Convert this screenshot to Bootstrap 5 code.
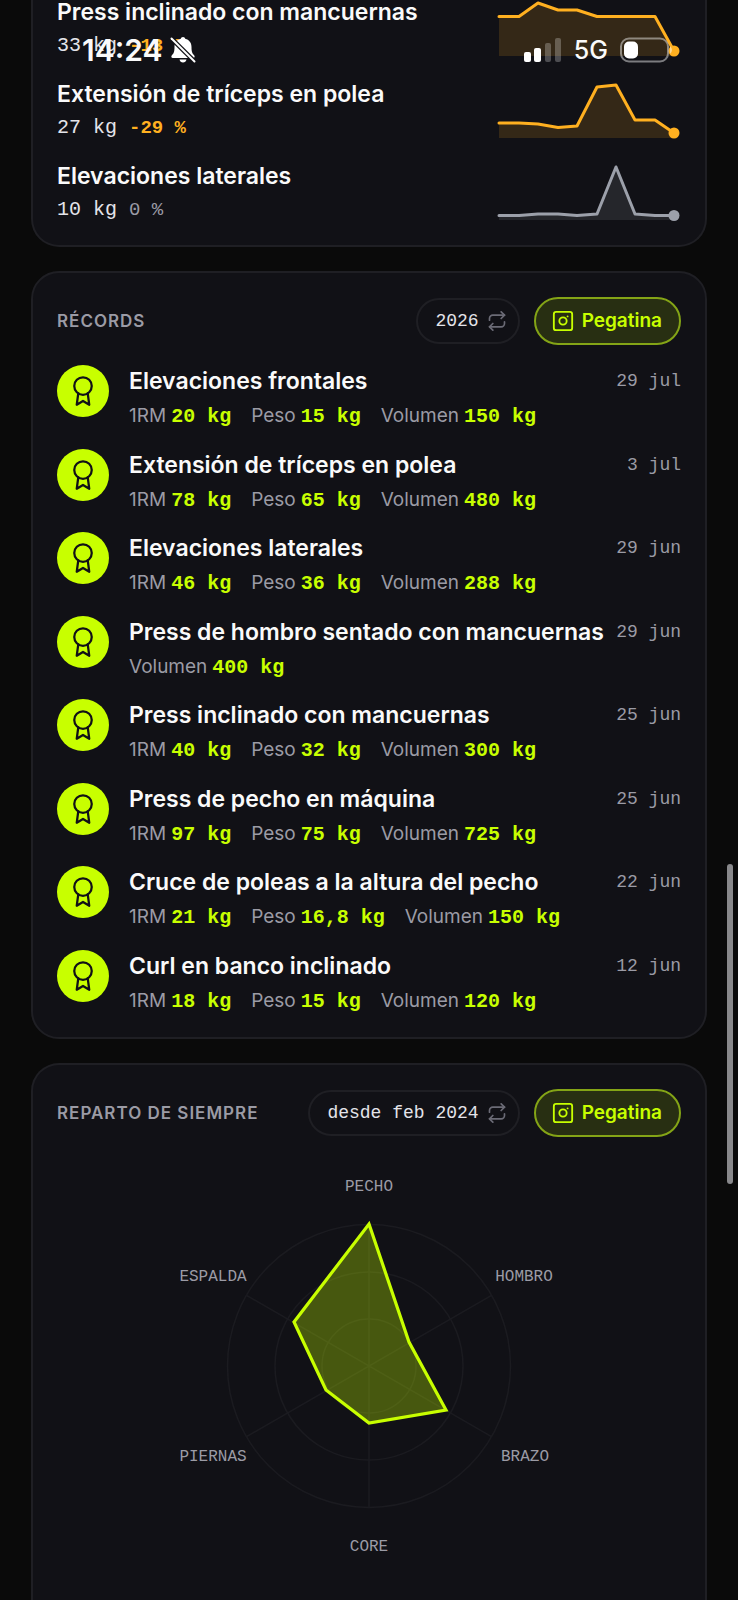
<!DOCTYPE html>
<html lang="es">
<head>
<meta charset="utf-8">
<meta name="viewport" content="width=device-width, initial-scale=1">
<title>Récords</title>
<link href="https://cdn.jsdelivr.net/npm/bootstrap@5.3.0/dist/css/bootstrap.min.css" rel="stylesheet">
<style>
  :root { --ink: #fafafa; --muted: #9b9ba5; --line: #1f1f24; --panel: #111116; --lime: #c8ff00; --amber: #ffb020; }
  body { background: #0a0a0a; color: var(--ink); font-family: Inter, "Liberation Sans", sans-serif; }
  .mono { font-family: "Liberation Mono", monospace; }
  .screen { height: 100vh; padding: 0 31px; gap: 24px; }
  .panel { background: var(--panel); border: 2px solid var(--line); border-radius: 28px; padding: 24px 24px 21px; }
  .panel-top { border-top: 0; border-radius: 0 0 28px 28px; padding: 0 24px 21px; }
  .panel-end { border-bottom: 0; border-radius: 28px 28px 0 0; }
  .trends { gap: 20px; margin-top: -2px; }
  .trend-text { gap: 6px; }
  .name { font-size: 23px; font-weight: 600; line-height: 28px; }
  .value { font-size: 20px; line-height: 28px; color: #e4e4ea; }
  .delta { font-size: 19px; font-weight: 700; margin-left: 12px; }
  .flat { color: var(--muted); font-weight: 400; }
  .down, .spark-down { color: var(--amber); }
  .spark-flat { color: #9ca0aa; }
  .spark { width: 184px; height: 56px; overflow: visible; }
  .heading { font-size: 17px; font-weight: 600; line-height: 24px; letter-spacing: 1px; color: var(--muted); text-transform: uppercase; margin: 0; }
  .tools { gap: 14px; }
  .pill { display: flex; align-items: center; gap: 8px; border-radius: 24px; border: 2px solid var(--line); background: transparent; }
  .pill-range { height: 46px; padding: 0 11px 0 17px; font-size: 18px; color: #e4e4ea; }
  .pill-range svg { color: #6b6b76; }
  .pill-share { height: 48px; padding: 0 17px 0 16px; font-size: 19px; font-weight: 600; color: var(--lime); border-color: #84a416; background: #282f12; }
  .records { min-height: 651px; margin-top: 20px; }
  .medal { width: 52px; height: 52px; background: var(--lime); color: #111116; }
  .record { gap: 20px; }
  .record-body { gap: 6px; padding-top: 1px; }
  .record .name { line-height: 30px; }
  .date { font-size: 18px; line-height: 30px; color: var(--muted); }
  .stats { column-gap: 20px; font-size: 19px; line-height: 28px; color: var(--muted); }
  .stats b { font-size: 20px; color: var(--lime); margin-left: 5px; }
  .radar { margin-top: 20px; }
  .radar text { font-size: 16px; fill: var(--muted); }
  .statusbar { top: 0; left: 0; right: 0; height: 100px; padding: 0 64px 0 82px; z-index: 5; pointer-events: none; }
  .clock { font-size: 30px; font-weight: 600; line-height: 32px; }
  .network { font-size: 25px; font-weight: 500; line-height: 32px; }
  .thumb { right: 5px; top: 54%; width: 6px; height: 20%; background: #88888b; z-index: 6; }
</style>
</head>
<body>
<svg class="d-none" aria-hidden="true">
  <symbol id="i-award" viewBox="0 0 24 24"><g fill="none" stroke="currentColor" stroke-width="1.8" stroke-linecap="round" stroke-linejoin="round"><circle cx="12" cy="8" r="7"/><path d="M8.21 13.89 7 23l5-3 5 3-1.21-9.12"/></g></symbol>
  <symbol id="i-repeat" viewBox="0 0 24 24"><g fill="none" stroke="currentColor" stroke-width="2" stroke-linecap="round" stroke-linejoin="round"><path d="m17 1 4 4-4 4"/><path d="M3 11V9a4 4 0 0 1 4-4h14"/><path d="m7 23-4-4 4-4"/><path d="M21 13v2a4 4 0 0 1-4 4H3"/></g></symbol>
  <symbol id="i-sticker" viewBox="0 0 24 24"><g fill="none" stroke="currentColor" stroke-width="2" stroke-linecap="round"><rect x="2" y="2" width="20" height="20" rx="2.5"/><circle cx="12" cy="12" r="4"/><path d="M17 7h.01"/></g></symbol>
</svg>

<header class="statusbar position-absolute d-flex align-items-center justify-content-between">
  <div class="d-flex align-items-center gap-2">
    <span class="clock">14:24</span>
    <svg width="26" height="28" viewBox="0 0 26 28" aria-label="Silencio"><path fill="#fff" d="M13 1c1.200 0 2 .8 2.200 1.800 4 1 6.300 4 6.300 8.200 0 5.500 1 6.500 2.800 8.500.8 1 .2 2.500-1.100 2.500H2.800c-1.300 0-1.900-1.500-1.100-2.500C3.500 17.500 4.500 16.500 4.500 11c0-4.200 2.300-7.200 6.300-8.200C11 1.800 11.800 1 13 1ZM9.500 23.500h7c-.4 1.800-1.700 3-3.500 3s-3.100-1.200-3.500-3Z"/><path stroke="#111116" stroke-width="4.500" d="m1 2 24 24"/><path stroke="#fff" stroke-width="2" stroke-linecap="round" d="m1.500 2.500 23 23"/></svg>
  </div>
  <div class="d-flex align-items-center">
    <svg width="38" height="24" viewBox="0 0 38 24" aria-label="Cobertura"><g fill="#fff"><rect y="14" width="7" height="10" rx="2"/><rect x="10" y="10" width="7" height="14" rx="2"/><g opacity=".25"><rect x="21" y="5" width="6" height="19" rx="2"/><rect x="31" width="6" height="24" rx="2"/></g></g></svg>
    <span class="network ms-2 ps-1">5G</span>
    <svg class="ms-2 ps-1" width="58" height="26" viewBox="0 0 54 26" aria-label="Batería"><rect x="1" y="1.500" width="47" height="23" rx="8" fill="none" stroke="#fff" stroke-opacity=".45" stroke-width="2"/><rect x="4" y="4.500" width="14" height="17" rx="5" fill="#fff"/><path d="M50 9q4 4 0 8z" fill="#fff" fill-opacity=".5"/></svg>
  </div>
</header>
<div class="thumb position-fixed rounded-pill"></div>

<main class="screen d-flex flex-column overflow-hidden">
  <section class="panel panel-top flex-shrink-0">
    <ul class="trends list-unstyled d-flex flex-column mb-0">
      <li class="d-flex align-items-center justify-content-between">
        <div class="trend-text d-flex flex-column"><span class="name">Press inclinado con mancuernas</span><span class="value mono">33 kg<span class="delta down">-13 %</span></span></div>
        <svg class="spark spark-down" viewBox="0 0 184 56"><path fill="currentColor" fill-opacity=".15" d="M2 15.500H22L41 2 61 9H80L100 15.500H158L177 50V55H2Z"/><path fill="none" stroke="currentColor" stroke-width="3" stroke-linecap="round" stroke-linejoin="round" d="M2 15.500H22L41 2 61 9H80L100 15.500H158L177 50"/><circle cx="177" cy="50" r="5.500" fill="currentColor"/></svg>
      </li>
      <li class="d-flex align-items-center justify-content-between">
        <div class="trend-text d-flex flex-column"><span class="name">Extensión de tríceps en polea</span><span class="value mono">27 kg<span class="delta down">-29 %</span></span></div>
        <svg class="spark spark-down" viewBox="0 0 184 56"><path fill="currentColor" fill-opacity=".15" d="M2 40H22L41 41 61 44.500 80 43 100 4 119 2 138 37H158L177 50V55H2Z"/><path fill="none" stroke="currentColor" stroke-width="3" stroke-linecap="round" stroke-linejoin="round" d="M2 40H22L41 41 61 44.500 80 43 100 4 119 2 138 37H158L177 50"/><circle cx="177" cy="50" r="5.500" fill="currentColor"/></svg>
      </li>
      <li class="d-flex align-items-center justify-content-between">
        <div class="trend-text d-flex flex-column"><span class="name">Elevaciones laterales</span><span class="value mono">10 kg<span class="delta flat">0 %</span></span></div>
        <svg class="spark spark-flat" viewBox="0 0 184 56"><path fill="currentColor" fill-opacity=".15" d="M2 50.500H22L41 49H61L80 50.500 100 49 119 2 138 49 158 50.500H177V55H2Z"/><path fill="none" stroke="currentColor" stroke-width="3" stroke-linecap="round" stroke-linejoin="round" d="M2 50.500H22L41 49H61L80 50.500 100 49 119 2 138 49 158 50.500H177"/><circle cx="177" cy="50.500" r="5.500" fill="currentColor"/></svg>
      </li>
    </ul>
  </section>

  <section class="panel flex-shrink-0">
    <div class="d-flex align-items-center justify-content-between">
      <h2 class="heading">Récords</h2>
      <div class="tools d-flex align-items-center">
        <button type="button" class="pill pill-range mono">2026 <svg width="20" height="20"><use href="#i-repeat"/></svg></button>
        <button type="button" class="pill pill-share"><svg width="22" height="22"><use href="#i-sticker"/></svg> Pegatina</button>
      </div>
    </div>
    <ul class="records list-unstyled d-flex flex-column justify-content-between mb-0">
      <li class="record d-flex">
        <span class="medal rounded-circle d-flex align-items-center justify-content-center flex-shrink-0"><svg width="30" height="30"><use href="#i-award"/></svg></span>
        <div class="record-body d-flex flex-column flex-grow-1"><div class="d-flex justify-content-between"><span class="name">Elevaciones frontales</span><span class="date mono">29 jul</span></div>
        <div class="stats d-flex"><span>1RM<b class="mono">20 kg</b></span><span>Peso<b class="mono">15 kg</b></span><span>Volumen<b class="mono">150 kg</b></span></div></div>
      </li>
      <li class="record d-flex">
        <span class="medal rounded-circle d-flex align-items-center justify-content-center flex-shrink-0"><svg width="30" height="30"><use href="#i-award"/></svg></span>
        <div class="record-body d-flex flex-column flex-grow-1"><div class="d-flex justify-content-between"><span class="name">Extensión de tríceps en polea</span><span class="date mono">3 jul</span></div>
        <div class="stats d-flex"><span>1RM<b class="mono">78 kg</b></span><span>Peso<b class="mono">65 kg</b></span><span>Volumen<b class="mono">480 kg</b></span></div></div>
      </li>
      <li class="record d-flex">
        <span class="medal rounded-circle d-flex align-items-center justify-content-center flex-shrink-0"><svg width="30" height="30"><use href="#i-award"/></svg></span>
        <div class="record-body d-flex flex-column flex-grow-1"><div class="d-flex justify-content-between"><span class="name">Elevaciones laterales</span><span class="date mono">29 jun</span></div>
        <div class="stats d-flex"><span>1RM<b class="mono">46 kg</b></span><span>Peso<b class="mono">36 kg</b></span><span>Volumen<b class="mono">288 kg</b></span></div></div>
      </li>
      <li class="record d-flex">
        <span class="medal rounded-circle d-flex align-items-center justify-content-center flex-shrink-0"><svg width="30" height="30"><use href="#i-award"/></svg></span>
        <div class="record-body d-flex flex-column flex-grow-1"><div class="d-flex justify-content-between"><span class="name">Press de hombro sentado con mancuernas</span><span class="date mono">29 jun</span></div>
        <div class="stats d-flex"><span>Volumen<b class="mono">400 kg</b></span></div></div>
      </li>
      <li class="record d-flex">
        <span class="medal rounded-circle d-flex align-items-center justify-content-center flex-shrink-0"><svg width="30" height="30"><use href="#i-award"/></svg></span>
        <div class="record-body d-flex flex-column flex-grow-1"><div class="d-flex justify-content-between"><span class="name">Press inclinado con mancuernas</span><span class="date mono">25 jun</span></div>
        <div class="stats d-flex"><span>1RM<b class="mono">40 kg</b></span><span>Peso<b class="mono">32 kg</b></span><span>Volumen<b class="mono">300 kg</b></span></div></div>
      </li>
      <li class="record d-flex">
        <span class="medal rounded-circle d-flex align-items-center justify-content-center flex-shrink-0"><svg width="30" height="30"><use href="#i-award"/></svg></span>
        <div class="record-body d-flex flex-column flex-grow-1"><div class="d-flex justify-content-between"><span class="name">Press de pecho en máquina</span><span class="date mono">25 jun</span></div>
        <div class="stats d-flex"><span>1RM<b class="mono">97 kg</b></span><span>Peso<b class="mono">75 kg</b></span><span>Volumen<b class="mono">725 kg</b></span></div></div>
      </li>
      <li class="record d-flex">
        <span class="medal rounded-circle d-flex align-items-center justify-content-center flex-shrink-0"><svg width="30" height="30"><use href="#i-award"/></svg></span>
        <div class="record-body d-flex flex-column flex-grow-1"><div class="d-flex justify-content-between"><span class="name">Cruce de poleas a la altura del pecho</span><span class="date mono">22 jun</span></div>
        <div class="stats d-flex"><span>1RM<b class="mono">21 kg</b></span><span>Peso<b class="mono">16,8 kg</b></span><span>Volumen<b class="mono">150 kg</b></span></div></div>
      </li>
      <li class="record d-flex">
        <span class="medal rounded-circle d-flex align-items-center justify-content-center flex-shrink-0"><svg width="30" height="30"><use href="#i-award"/></svg></span>
        <div class="record-body d-flex flex-column flex-grow-1"><div class="d-flex justify-content-between"><span class="name">Curl en banco inclinado</span><span class="date mono">12 jun</span></div>
        <div class="stats d-flex"><span>1RM<b class="mono">18 kg</b></span><span>Peso<b class="mono">15 kg</b></span><span>Volumen<b class="mono">120 kg</b></span></div></div>
      </li>
    </ul>
  </section>

  <section class="panel panel-end flex-grow-1">
    <div class="d-flex align-items-center justify-content-between">
      <h2 class="heading">Reparto de siempre</h2>
      <div class="tools d-flex align-items-center">
        <button type="button" class="pill pill-range mono">desde feb 2024 <svg width="20" height="20"><use href="#i-repeat"/></svg></button>
        <button type="button" class="pill pill-share"><svg width="22" height="22"><use href="#i-sticker"/></svg> Pegatina</button>
      </div>
    </div>
    <svg class="radar mono d-block w-100" viewBox="0 0 624 420">
      <g fill="none" stroke="#1b1b20" stroke-width="1.500">
        <circle cx="312" cy="209" r="47"/><circle cx="312" cy="209" r="94"/><circle cx="312" cy="209" r="141.500"/>
        <path d="M312 67.500v283M189.500 138.300l245 141.400M434.500 138.300l-245 141.400"/>
      </g>
      <path d="M312 67 352 185 389 253 312 266 269 233 237 165Z" fill="#c8ff00" fill-opacity=".3" stroke="#c8ff00" stroke-width="3.200" stroke-linejoin="miter"/>
      <g text-anchor="middle">
        <text x="312" y="34">PECHO</text><text x="467" y="124">HOMBRO</text><text x="468" y="304">BRAZO</text>
        <text x="312" y="394">CORE</text><text x="156" y="304">PIERNAS</text><text x="156" y="124">ESPALDA</text>
      </g>
    </svg>
  </section>
</main>
<script src="https://cdn.jsdelivr.net/npm/bootstrap@5.3.0/dist/js/bootstrap.bundle.min.js"></script>
</body>
</html>
